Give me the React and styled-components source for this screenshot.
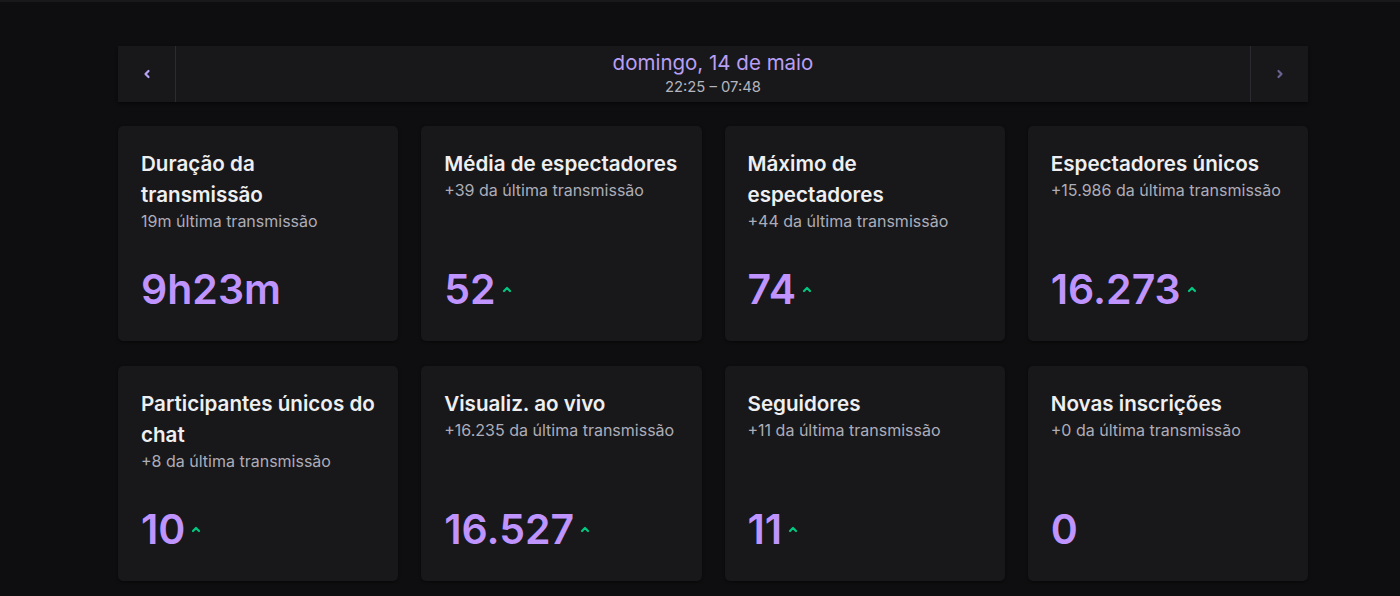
import React from "react";
import styled, { createGlobalStyle } from "styled-components";

const GlobalStyle = createGlobalStyle`
  html, body {
    margin: 0;
    padding: 0;
    background: #0e0e10;
    font-family: Inter, "Noto Sans", sans-serif;
    -webkit-font-smoothing: antialiased;
  }
`;

const stats = [
  { title: "Duração da transmissão", sub: "19m última transmissão", value: "9h23m", up: false },
  { title: "Média de espectadores", sub: "+39 da última transmissão", value: "52", up: true },
  { title: "Máximo de espectadores", sub: "+44 da última transmissão", value: "74", up: true },
  { title: "Espectadores únicos", sub: "+15.986 da última transmissão", value: "16.273", up: true },
  { title: "Participantes únicos do chat", sub: "+8 da última transmissão", value: "10", up: true },
  { title: "Visualiz. ao vivo", sub: "+16.235 da última transmissão", value: "16.527", up: true },
  { title: "Seguidores", sub: "+11 da última transmissão", value: "11", up: true },
  { title: "Novas inscrições", sub: "+0 da última transmissão", value: "0", up: false },
];

const Chevron = ({ dir = "left", color }) => (
  <svg width="10" height="10" viewBox="0 0 10 10">
    <path
      d={dir === "left" ? "M6.5 2 L3.5 5 L6.5 8" : "M3.5 2 L6.5 5 L3.5 8"}
      fill="none"
      stroke={color}
      strokeWidth="2.2"
      strokeLinecap="round"
      strokeLinejoin="round"
    />
  </svg>
);

const UpArrow = () => (
  <svg width="10" height="8" viewBox="0 0 10 8">
    <path d="M2 6 L5 3 L8 6" fill="none" stroke="#00c87f" strokeWidth="2.2" strokeLinecap="round" strokeLinejoin="round" />
  </svg>
);

export default function App() {
  return (
    <>
      <GlobalStyle />
      <Page>
        <Wrap>
          <DateNav>
            <NavButton side="left">
              <Chevron dir="left" color="#b9a3f5" />
            </NavButton>
            <DateInfo>
              <DateLabel>domingo, 14 de maio</DateLabel>
              <TimeRange>22:25 – 07:48</TimeRange>
            </DateInfo>
            <NavButton side="right">
              <Chevron dir="right" color="#6c6390" />
            </NavButton>
          </DateNav>

          <Grid>
            {stats.map((s) => (
              <Card key={s.title}>
                <CardTitle>{s.title}</CardTitle>
                <CardSub>{s.sub}</CardSub>
                <ValueRow>
                  <Value>{s.value}</Value>
                  {s.up && <UpArrow />}
                </ValueRow>
              </Card>
            ))}
          </Grid>
        </Wrap>
      </Page>
    </>
  );
}

const Page = styled.div`
  min-height: 596px;
  box-sizing: border-box;
  border-top: 2px solid #19191c;
  padding-top: 44px;
`;

const Wrap = styled.div`
  width: 1190px;
  margin-left: 118px;
  display: flex;
  flex-direction: column;
  gap: 24px;
`;

const DateNav = styled.div`
  height: 56px;
  display: flex;
  background: #18181b;
  box-shadow: 0 2px 3px rgba(0, 0, 0, 0.45);
`;

const NavButton = styled.div`
  width: 57px;
  display: flex;
  align-items: center;
  justify-content: center;
  border-left: ${(p) => (p.side === "right" ? "1px solid #2c2c30" : "none")};
  border-right: ${(p) => (p.side === "left" ? "1px solid #2c2c30" : "none")};
`;

const DateInfo = styled.div`
  flex: 1;
  display: flex;
  flex-direction: column;
  align-items: center;
  padding-top: 4px;
`;

const DateLabel = styled.div`
  font-size: 20.5px;
  line-height: 25px;
  color: #b99ff4;
`;

const TimeRange = styled.div`
  font-size: 14.8px;
  line-height: 19px;
  color: #b5b5be;
  margin-top: 3px;
`;

const Grid = styled.div`
  display: grid;
  grid-template-columns: repeat(4, 1fr);
  column-gap: 23px;
  row-gap: 25px;
`;

const Card = styled.div`
  height: 215px;
  box-sizing: border-box;
  padding: 22px 20px 28px 23px;
  background: #18181b;
  border-radius: 5px;
  box-shadow: 0 1px 3px rgba(0, 0, 0, 0.5);
  display: flex;
  flex-direction: column;
`;

const CardTitle = styled.div`
  font-size: 20.6px;
  font-weight: 600;
  line-height: 31px;
  color: #efeff1;
`;

const CardSub = styled.div`
  font-size: 16px;
  line-height: 22px;
  color: #adadb8;
`;

const ValueRow = styled.div`
  margin-top: auto;
  display: flex;
  align-items: center;
  gap: 6px;
`;

const Value = styled.div`
  font-size: 41px;
  font-weight: 600;
  line-height: 48px;
  color: #bf94ff;
`;
